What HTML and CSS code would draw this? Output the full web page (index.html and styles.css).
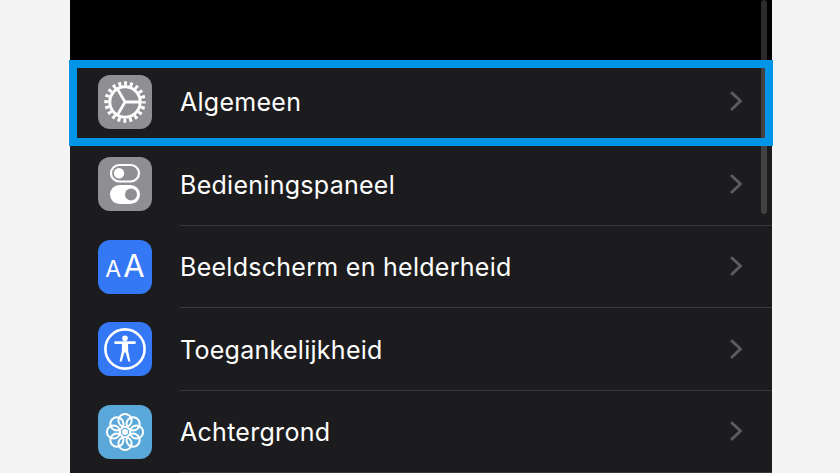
FILE: index.html
```html
<!DOCTYPE html>
<html lang="nl">
<head>
<meta charset="utf-8">
<title>Instellingen</title>
<link rel="stylesheet" href="styles.css">
</head>
<body>
<main class="phone">
  <div class="top"></div>
  <ul class="list">
    <li class="row">
      <div class="icon gray">
        <svg viewBox="0 0 54 54" class="glyph">
          <circle cx="27" cy="27" r="18.6" class="teeth"/>
          <circle cx="27" cy="27" r="15.2" class="ring"/>
          <path d="M27 27H41M27 27L20 14.9M27 27L20 39.1" class="spoke"/>
        </svg>
      </div>
      <div class="label"><span>Algemeen</span><svg class="chev" viewBox="0 0 12 20"><path d="M2 2l8.5 8-8.5 8"/></svg></div>
    </li>
    <li class="row">
      <div class="icon gray">
        <svg viewBox="0 0 54 54" class="glyph">
          <rect x="13" y="8" width="28" height="16.5" rx="8.25" class="line"/>
          <circle cx="21" cy="16.2" r="5.2" class="solid"/>
          <rect x="12" y="28" width="30" height="19" rx="9.5" class="solid"/>
          <circle cx="33" cy="37.5" r="6" class="hole"/>
        </svg>
      </div>
      <div class="label"><span>Bedieningspaneel</span><svg class="chev" viewBox="0 0 12 20"><path d="M2 2l8.5 8-8.5 8"/></svg></div>
    </li>
    <li class="row">
      <div class="icon blue aa"><span class="small-a">A</span><span class="big-a">A</span></div>
      <div class="label"><span>Beeldscherm en helderheid</span><svg class="chev" viewBox="0 0 12 20"><path d="M2 2l8.5 8-8.5 8"/></svg></div>
    </li>
    <li class="row">
      <div class="icon blue">
        <svg viewBox="0 0 54 54" class="glyph">
          <circle cx="27" cy="27" r="19.6" class="line wide"/>
          <circle cx="27" cy="16.2" r="2.8" class="solid"/>
          <path d="M17.5 20.6H36.5" class="limb"/>
          <path d="M24 21h6l.2 8 2.2 10.4h-2.1L27.6 30.5h-1.2L23.7 39.4h-2.1l2.2-10.4z" class="solid"/>
        </svg>
      </div>
      <div class="label"><span>Toegankelijkheid</span><svg class="chev" viewBox="0 0 12 20"><path d="M2 2l8.5 8-8.5 8"/></svg></div>
    </li>
    <li class="row">
      <div class="icon sky">
        <svg viewBox="0 0 54 54" class="glyph">
          <g class="petals">
            <circle cx="27" cy="15.5" r="6.6"/><circle cx="35.1" cy="18.9" r="6.6"/>
            <circle cx="38.5" cy="27" r="6.6"/><circle cx="35.1" cy="35.1" r="6.6"/>
            <circle cx="27" cy="38.5" r="6.6"/><circle cx="18.9" cy="35.1" r="6.6"/>
            <circle cx="15.5" cy="27" r="6.6"/><circle cx="18.9" cy="18.9" r="6.6"/>
          </g>
          <circle cx="27" cy="27" r="3" class="solid"/>
        </svg>
      </div>
      <div class="label"><span>Achtergrond</span><svg class="chev" viewBox="0 0 12 20"><path d="M2 2l8.5 8-8.5 8"/></svg></div>
    </li>
  </ul>
  <div class="scrollbar"></div>
  <div class="highlight"></div>
</main>
</body>
</html>
```

FILE: styles.css
```css
html, body {
  margin: 0;
  height: 100%;
  background: #f4f4f4;
  overflow: hidden;
}

.phone {
  position: relative;
  margin-left: 70px;
  width: 702px;
  height: 473px;
  background: #1c1c1e;
  font-family: Inter, "Liberation Sans", sans-serif;
  color: #fff;
}

.top {
  height: 60.5px;
  background: #000;
}

.list {
  list-style: none;
  margin: 0;
  padding: 0;
}

.row {
  display: flex;
  align-items: center;
  height: 82.5px;
  padding-left: 28px;
  box-sizing: border-box;
}

.icon {
  flex: none;
  width: 54px;
  height: 54px;
  border-radius: 12px;
  display: flex;
  align-items: center;
  justify-content: center;
}

.gray { background: #8e8e93; }
.blue { background: #3478f6; }
.sky { background: #5aa8d9; }

.glyph {
  width: 54px;
  height: 54px;
  display: block;
}

.teeth {
  fill: none;
  stroke: #fff;
  stroke-width: 4.2;
  stroke-dasharray: 2.9 2.943;
  stroke-dashoffset: 1.45;
}

.ring, .line {
  fill: none;
  stroke: #fff;
  stroke-width: 2.2;
}

.ring { stroke-width: 3; }
.wide { stroke-width: 2.6; }

.spoke {
  fill: none;
  stroke: #fff;
  stroke-width: 2.8;
}

.limb {
  fill: none;
  stroke: #fff;
  stroke-width: 2.8;
  stroke-linecap: round;
}

.solid { fill: #fff; }
.hole { fill: #8e8e93; }

.petals circle {
  fill: none;
  stroke: #fff;
  stroke-width: 2;
}

.aa {
  align-items: baseline;
  gap: 2px;
  line-height: 52px;
  color: #fff;
  font-weight: 400;
}

.small-a { font-size: 23px; }
.big-a { font-size: 31px; }

.label {
  flex: 1;
  align-self: stretch;
  margin-left: 28px;
  padding-right: 30px;
  padding-top: 2px;
  display: flex;
  align-items: center;
  justify-content: space-between;
  font-size: 25px;
  letter-spacing: 0.28px;
  border-bottom: 1px solid #38383a;
}

.chev {
  width: 12px;
  height: 20px;
  margin-top: -2px;
  fill: none;
  stroke: #5c5c60;
  stroke-width: 3;
  stroke-linecap: round;
  stroke-linejoin: round;
}

.scrollbar {
  position: absolute;
  left: 691px;
  top: 0;
  width: 6px;
  height: 214px;
  border-radius: 3px;
  background: rgba(255, 255, 255, 0.17);
}

.highlight {
  position: absolute;
  left: -1px;
  top: 60px;
  width: 704px;
  height: 86px;
  box-sizing: border-box;
  border: 8px solid #0095e6;
}
```
